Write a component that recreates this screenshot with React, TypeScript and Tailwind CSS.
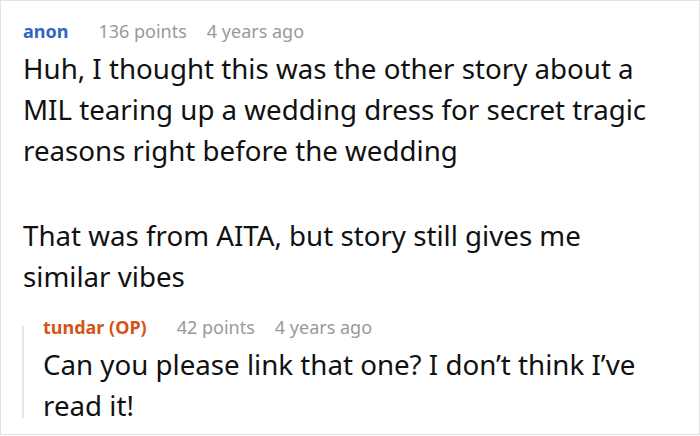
import React from "react";

export default function App() {
  return (
    <div className="w-[700px] h-[435px] bg-white border border-[#e2e2e2] overflow-hidden" style={{ fontFamily: '"Noto Sans", "Open Sans", sans-serif' }}>
      <div className="pl-[22px] pt-[17px] pr-[40px]">
        <div className="flex items-baseline text-[18px] leading-[26px]">
          <span className="font-bold text-[#3566bd]">anon</span>
          <span className="ml-[30px] text-[#999]">136 points</span>
          <span className="ml-[20px] text-[#999]">4 years ago</span>
        </div>
        <div className="text-[27.7px] leading-[41px] text-[#111] mt-[4px]">
          <p>Huh, I thought this was the other story about a MIL tearing up a wedding dress for secret tragic reasons right before the wedding</p>
          <p className="mt-[44px]">That was from AITA, but story still gives me similar vibes</p>
        </div>
        <div className="mt-[17px] -ml-[1px] flex">
          <div className="w-[2px] bg-[#e4e4e4] mt-[12px] mb-[8px] shrink-0" />
          <div className="pl-[19px]">
            <div className="flex items-baseline text-[18px] leading-[26px]">
              <span className="font-bold text-[#d4541b]">tundar (OP)</span>
              <span className="ml-[30px] text-[#999]">42 points</span>
              <span className="ml-[20px] text-[#999]">4 years ago</span>
            </div>
            <div className="text-[27.7px] leading-[41px] text-[#111] mt-[4px]">
              <p>Can you please link that one? I don’t think I’ve read it!</p>
            </div>
          </div>
        </div>
      </div>
    </div>
  );
}
